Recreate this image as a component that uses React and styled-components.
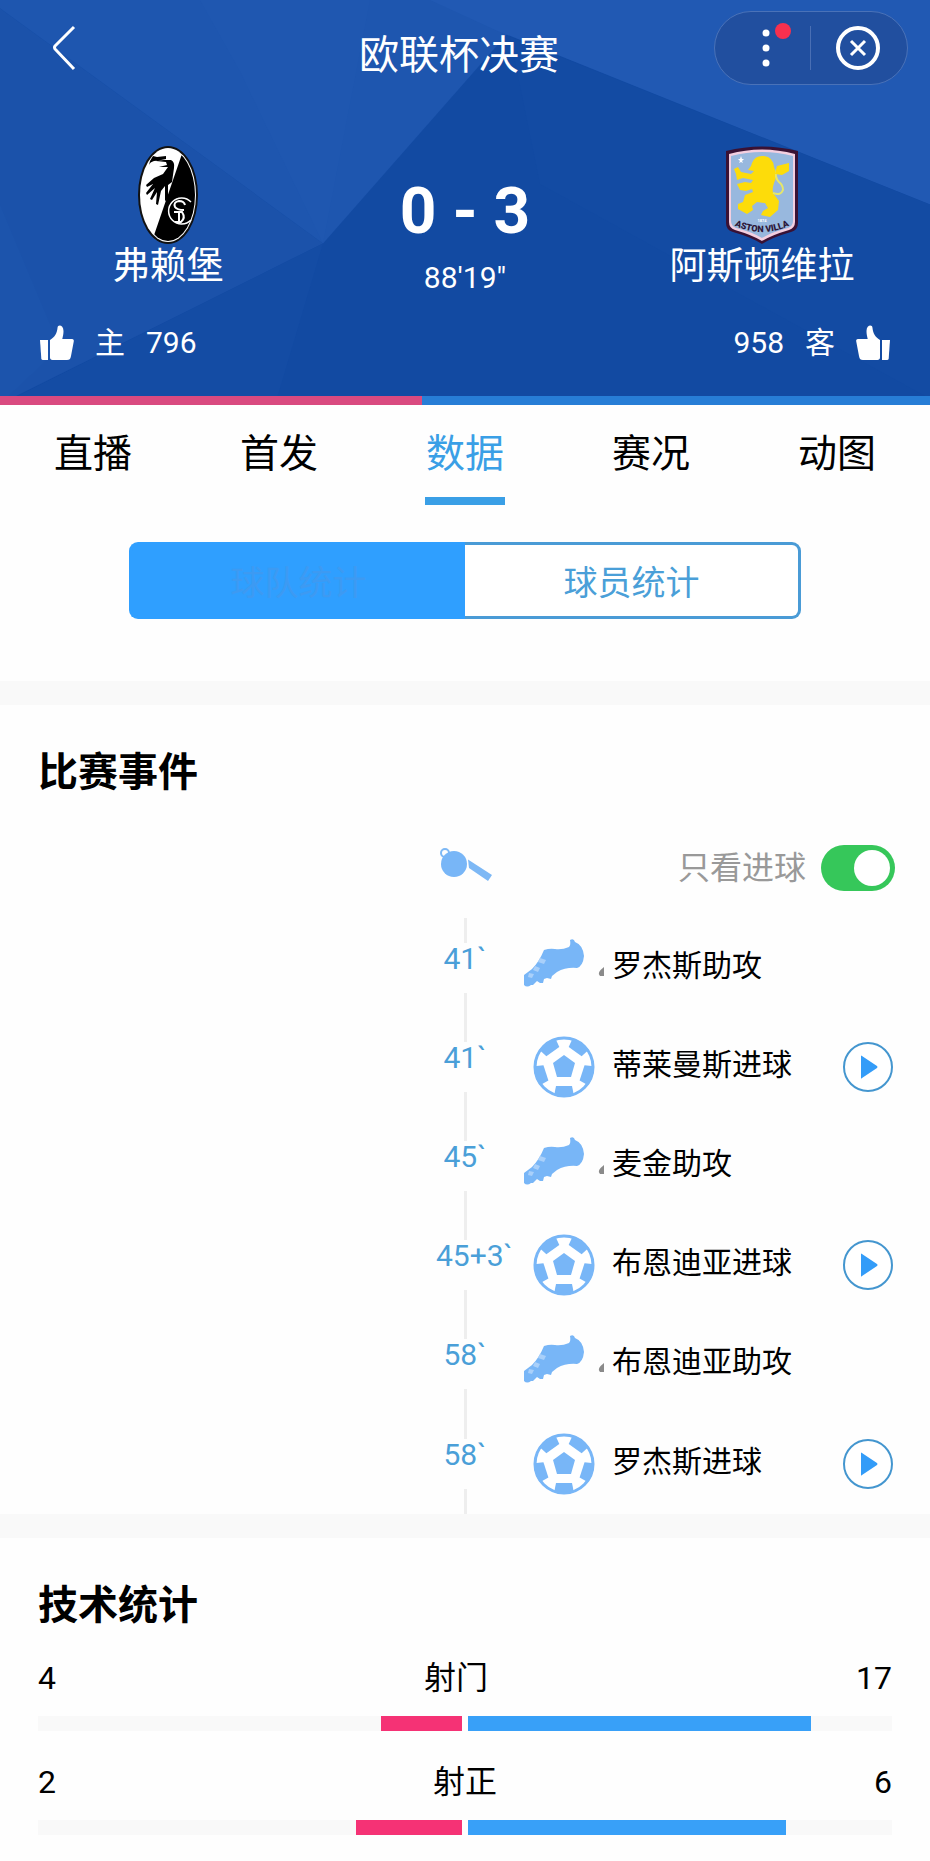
import React, { useState } from "react";
import styled, { createGlobalStyle } from "styled-components";

const GlobalStyle = createGlobalStyle`
  * {
    box-sizing: border-box;
  }
  body {
    margin: 0;
    background: #fefefe;
    color: #000;
    font-family: Roboto, "Noto Sans CJK SC", sans-serif;
  }
  button {
    padding: 0;
    border: 0;
    background: none;
    color: inherit;
    font: inherit;
    cursor: pointer;
  }
  h1, h2, p, ul {
    margin: 0;
    padding: 0;
  }
  svg {
    display: block;
    overflow: visible;
  }
`;

const Hero = styled.header`
  position: relative;
  color: #fff;
  background: #124aa2;
`;
const HeroPattern = styled.svg`
  position: absolute;
  inset: 0;
  width: 100%;
  height: 100%;
  overflow: hidden;
`;
const HeroContent = styled.div`
  position: relative;
  height: 396px;
`;
const TopBar = styled.div`
  display: grid;
  grid-template-columns: 204px 1fr 194px;
  align-items: center;
  padding: 11px 22px 0 0;
`;
const BackButton = styled.button`
  justify-self: start;
  padding-left: 52px;
`;
const Title = styled.h1`
  font-size: 40px;
  font-weight: 400;
  line-height: 56px;
  padding: 16px 0 0;
  text-align: center;
`;
const Capsule = styled.div`
  display: grid;
  grid-template-columns: 95px 1fr;
  align-items: center;
  height: 74px;
  border: 1px solid #4a72b8;
  border-radius: 37px;
  background: #214f9f;
`;
const CapsuleButton = styled.button`
  display: flex;
  justify-content: center;
  & + & {
    border-left: 1px solid #4a6fb4;
  }
`;
const Scoreboard = styled.div`
  display: grid;
  grid-template-columns: 336px 1fr 336px;
  padding-top: 61px;
`;
const Team = styled.div`
  display: flex;
  flex-direction: column;
  align-items: center;
`;
const TeamName = styled.p`
  font-size: 37px;
  line-height: 46px;
`;
const Score = styled.p`
  font-size: 64px;
  font-weight: 700;
  line-height: 72px;
  padding-top: 30px;
  text-align: center;
`;
const Clock = styled.p`
  font-size: 30px;
  line-height: 36px;
  padding-top: 12px;
  text-align: center;
`;
const Votes = styled.div`
  display: flex;
  justify-content: space-between;
  padding: 29px 40px 0;
`;
const VoteButton = styled.button`
  display: flex;
  flex-direction: ${(p) => (p.$away ? "row-reverse" : "row")};
  align-items: center;
  gap: 21px;
  font-size: 30px;
  line-height: 36px;
  svg {
    transform: ${(p) => (p.$away ? "scaleX(-1)" : "none")};
  }
`;
const VoteBar = styled.div`
  position: relative;
  display: flex;
  height: 9px;
  background: #277dd6;
`;
const VoteShare = styled.div`
  background: #d94a80;
`;

const Tabs = styled.nav`
  display: grid;
  grid-template-columns: repeat(5, 1fr);
`;
const Tab = styled.button`
  display: flex;
  flex-direction: column;
  align-items: center;
  gap: 15px;
  padding-top: 21px;
  font-size: 39px;
  line-height: 56px;
  color: ${(p) => (p.$active ? "#3a9fe6" : "#000")};
  &::after {
    content: "";
    width: 80px;
    height: 8px;
    background: ${(p) => (p.$active ? "#3a9fe6" : "transparent")};
  }
`;
const Segments = styled.div`
  display: flex;
  margin: 37px 129px 62px;
  height: 77px;
`;
const Segment = styled.button`
  flex: 1;
  font-size: 34px;
  color: ${(p) => (p.$active ? "#3d9af2" : "#4a9fd8")};
  background: ${(p) => (p.$active ? "#2f9fff" : "#fff")};
  border: 3px solid ${(p) => (p.$active ? "#2f9fff" : "#4a9bd6")};
  &:first-child {
    border-right: 0;
    border-radius: 9px 0 0 9px;
  }
  &:last-child {
    border-left: 0;
    border-radius: 0 9px 9px 0;
  }
`;

const Divider = styled.div`
  height: 24px;
  background: #f9f9f9;
`;
const SectionTitle = styled.h2`
  padding: 40px 38px 0;
  font-size: 40px;
  font-weight: 700;
  line-height: 56px;
`;
const EventsHead = styled.div`
  display: grid;
  grid-template-columns: 1fr 1fr;
  padding: 44px 0 27px;
`;
const KickOff = styled.div`
  grid-column: 2;
  grid-row: 1;
  justify-self: start;
  margin: 2px 0 0 -25px;
`;
const GoalsOnly = styled.label`
  grid-column: 2;
  grid-row: 1;
  justify-self: end;
  display: flex;
  align-items: center;
  gap: 15px;
  padding-right: 35px;
  font-size: 32px;
  line-height: 46px;
  color: #999;
`;
const Switch = styled.input`
  appearance: none;
  display: flex;
  justify-content: flex-end;
  width: 74px;
  height: 46px;
  margin: 0;
  padding: 5px;
  border-radius: 23px;
  background: ${(p) => (p.checked ? "#36c75a" : "#ddd")};
  &::before {
    content: "";
    width: 36px;
    height: 36px;
    border-radius: 50%;
    background: #fff;
    margin-right: ${(p) => (p.checked ? "0" : "28px")};
  }
`;
const EventList = styled.ul`
  list-style: none;
`;
const EventRow = styled.li`
  display: grid;
  grid-template-columns: 58px 80px 1fr 50px;
  align-items: center;
  height: 99px;
  margin-left: calc(50% - 29px);
  padding-right: 37px;
  &:last-child {
    height: 101px;
  }
`;
const TimeCell = styled.div`
  display: flex;
  flex-direction: column;
  height: 100%;
  &::before,
  &::after {
    content: "";
    flex: 1;
    width: 3px;
    margin: 0 auto;
    background: #eee;
  }
`;
const Time = styled.time`
  height: 50px;
  font-size: 30px;
  line-height: 32px;
  text-align: center;
  white-space: nowrap;
  color: #4a9fd8;
`;
const EventIcon = styled.div`
  margin-left: 30px;
`;
const EventText = styled.p`
  padding: 0 0 3px 38px;
  font-size: 30px;
  line-height: 44px;
`;

const StatList = styled.div`
  padding: 21px 0 10px;
`;
const Stat = styled.div`
  padding: 0 38px;
`;
const StatLabels = styled.div`
  display: flex;
  justify-content: space-between;
  font-size: 32px;
  line-height: 46px;
`;
const StatBars = styled.div`
  display: grid;
  grid-template-columns: 1fr 1fr;
  gap: 6px;
  margin: 15px 0 28px;
`;
const StatTrack = styled.div`
  display: flex;
  justify-content: ${(p) => (p.$home ? "flex-end" : "flex-start")};
  height: 15px;
  background: #f9f9f9;
`;
const StatFill = styled.div`
  background: ${(p) => (p.$home ? "#f53275" : "#38a0f8")};
`;

const Thumb = () => (
  <svg width="34" height="36" viewBox="0 0 34 36" fill="#fff">
    <path d="M0 15h8v20H3q-1.500 0-1.700-1.500z" />
    <path d="M10 15C15 12 17 8 17.500 3c.2-4 6-3 6 3 0 3-.6 5.500-1.200 8H32c1.500 0 2 1 1.800 2.300L31 31c-.6 3-1.500 4-4 4H12.500c-1.600 0-2.500-1-2.500-2.500z" />
  </svg>
);

const FreiburgCrest = () => (
  <svg width="60" height="98" viewBox="0 0 60 98">
    <clipPath id="oval">
      <ellipse cx="30" cy="49" rx="27" ry="46" />
    </clipPath>
    <ellipse cx="30" cy="49" rx="30" ry="49" fill="#111" />
    <ellipse cx="30" cy="49" rx="28" ry="47" fill="#fff" />
    <path clipPath="url(#oval)" d="M45 5 14 95h46V5z" fill="#000" />
    <path d="M11 19q1-3 5-4l10-1h7q4 2 3 8l-2 14-4 3 0 14-3 2 0-15-4 5-3 14-2-1 1-12-5 8-2-1 5-11-8 7-1-2 7-9-6 3-1-2 8-7 9-4 5-7-9 0 8-2-1-3-10-1 10-2v-3l-9 1-4-1-3 5z" fill="#000" />
    <g fill="none" stroke="#fff" strokeWidth="1.500">
      <path d="M53 56a13 13 0 1 0 0 18" />
      <path d="M47 59q-1-4-6-4-6 1-4 6 2 3 9 3M36 66h8q4 6-1 10h-6M41 66v9" strokeWidth="2" />
    </g>
  </svg>
);

const VillaCrest = () => (
  <svg width="74" height="98" viewBox="0 0 74 98">
    <path d="M1 5Q37-4 73 5v72q0 7-7 9-18 5-29 12-11-7-29-12-7-2-7-9z" fill="#3a1234" />
    <path d="M4 8Q37-1 70 8v68q0 6-6 8-17 5-27 11-10-6-27-11-6-2-6-8z" fill="#f3cfe0" />
    <path d="M6 10Q37 2 68 10v65q0 5-5 7-16 4-26 10-10-6-26-10-5-2-5-7z" fill="#98b8de" />
    <path d="m16 10 1 3h2l-2 2 1 2-2-1-2 1 1-2-2-2h2z" fill="#fff" />
    <path d="M27 17q3-8 12-7 9 1 10 11l3 8-3 8q-2 6-1 10l6 8-1 9-8 7-9-2 2-4 5-3-3-5-8-1-5 4 1 4-6 4-9-5 0-5 5-2 2-7 8-3-1-3-6 2-6-1-3-6 8-2 6 1 2-3-10-2-6 2-1-6-2-5 4-2 3 5 10 2 3-3-6-1 3-4z" fill="#fddc0a" />
    <path d="M48 47q8 3 10-3 0-5-4-8-5-5-2-13" fill="none" stroke="#e6e66a" strokeWidth="2" />
    <path d="m50 28 2-8 12-3 0 8-7 4z" fill="#fddc0a" />
    <path id="villaArc" d="M8 79Q37 93 66 79" fill="none" />
    <text fontSize="4" fill="#fff" x="37" y="76" textAnchor="middle" fontWeight="700">1874</text>
    <text fontSize="9" fontWeight="900" fill="#2d1738" textAnchor="middle">
      <textPath href="#villaArc" startOffset="50%">ASTON VILLA</textPath>
    </text>
  </svg>
);

const Whistle = () => (
  <svg width="52" height="36" viewBox="0 0 52 36">
    <circle cx="5" cy="6" r="4" fill="none" stroke="#7db8f5" strokeWidth="2" />
    <circle cx="14" cy="17" r="13" fill="#78b6f7" />
    <path d="M28 12.500 52 28l-4 6-19-13z" fill="#7db8f5" />
  </svg>
);

const Boot = () => (
  <svg width="80" height="62" viewBox="0 0 80 62">
    <path d="M0 35 8 29q7-7 12-19 6-2 11-1 7 1 14-2 2-2 1-7 4-2 5 2 8 3 9 14-1 10-7 12-11-1-20 4l-5 4-1 3-4-1-3 1-1 4-3 0-3-2-4 4-2 0q-4 3-7 0z" transform="translate(0 3)" fill="#78b6f7" />
    <path d="m16 21 6 2-2 4-6-2zM11 29l5 2-2 4-5-2zM5 36l5 1-2 4-4-1z" fill="#a9d0fa" />
    <path d="M80 30v9h-4q-4-3 4-9z" fill="#8a8a8a" />
  </svg>
);

const Ball = () => (
  <svg width="80" height="62" viewBox="-40 -31 80 62">
    <clipPath id="ball">
      <circle r="30" />
    </clipPath>
    <circle r="30" fill="#fff" />
    <path d="M0-12 11-4 7 10H-7L-11-4z" fill="#78b6f7" />
    <g clipPath="url(#ball)" fill="#78b6f7">
      {[0, 72, 144, 216, 288].map((angle) => (
        <path key={angle} transform={`rotate(${angle})`} d="M-11 34 -8 19H8l3 15z" />
      ))}
    </g>
    <circle r="29" fill="none" stroke="#78b6f7" strokeWidth="3" />
  </svg>
);

const PlayIcon = () => (
  <svg width="50" height="50" viewBox="0 0 50 50">
    <circle cx="25" cy="25" r="24" fill="#fff" stroke="#4496cf" strokeWidth="2" />
    <path d="M18 14q0-1 1 0l15 10q1 1 0 2L19 36q-1 1-1 0z" fill="#339cf8" />
  </svg>
);

const tabs = ["直播", "首发", "数据", "赛况", "动图"];

const segments = ["球队统计", "球员统计"];

const events = [
  { time: "41`", type: "assist", text: "罗杰斯助攻" },
  { time: "41`", type: "goal", text: "蒂莱曼斯进球" },
  { time: "45`", type: "assist", text: "麦金助攻" },
  { time: "45+3`", type: "goal", text: "布恩迪亚进球" },
  { time: "58`", type: "assist", text: "布恩迪亚助攻" },
  { time: "58`", type: "goal", text: "罗杰斯进球" },
];

const stats = [
  { label: "射门", home: 4, away: 17 },
  { label: "射正", home: 2, away: 6 },
];

const votes = { home: 796, away: 958 };

export default function App() {
  const [tab, setTab] = useState("数据");
  const [segment, setSegment] = useState("球队统计");
  const [goalsOnly, setGoalsOnly] = useState(true);

  return (
    <>
      <GlobalStyle />
      <Hero>
        <HeroPattern viewBox="0 0 930 396" preserveAspectRatio="none">
          <path d="M0 0H930V396H0z" fill="#124aa2" />
          <path d="M0 8 323 238 0 395z" fill="#1b52aa" />
          <path d="M0 0H440L510 30 323 238 0 8z" fill="#1e56af" />
          <path d="M240 70 323 238 370 0H200z" fill="#1f57b0" />
          <path d="M430 0H930V200L497 30z" fill="#2159b3" />
          <path d="M0 200 60 340 0 395z" fill="#1c54ac" />
          <path d="M323 238 275 396H0z" fill="#144ca4" />
          <path d="M510 36 540 180 930 390V200z" fill="#134ba3" />
        </HeroPattern>
        <HeroContent>
          <TopBar>
            <BackButton aria-label="返回">
              <svg width="24" height="44" viewBox="0 0 24 44" fill="none" stroke="#fff" strokeWidth="3">
                <path d="M22 1 3 20q-1 1 0 3l19 20" />
              </svg>
            </BackButton>
            <Title>欧联杯决赛</Title>
            <Capsule>
              <CapsuleButton aria-label="更多">
                <svg width="46" height="46" viewBox="0 0 46 46" fill="#fff">
                  <circle cx="26" cy="8" r="3.500" />
                  <circle cx="26" cy="23" r="3.500" />
                  <circle cx="26" cy="38" r="3.500" />
                  <circle cx="43" cy="6" r="8" fill="#f8304e" />
                </svg>
              </CapsuleButton>
              <CapsuleButton aria-label="关闭">
                <svg width="44" height="44" viewBox="0 0 44 44" fill="none" stroke="#fff">
                  <circle cx="21" cy="22" r="20" strokeWidth="4" />
                  <path d="m14 15 14 14M28 15 14 29" strokeWidth="3" />
                </svg>
              </CapsuleButton>
            </Capsule>
          </TopBar>
          <Scoreboard>
            <Team>
              <FreiburgCrest />
              <TeamName>弗赖堡</TeamName>
            </Team>
            <div>
              <Score>0 - 3</Score>
              <Clock>88'19"</Clock>
            </div>
            <Team>
              <VillaCrest />
              <TeamName>阿斯顿维拉</TeamName>
            </Team>
          </Scoreboard>
          <Votes>
            <VoteButton>
              <Thumb />
              <span>主</span>
              <span>{votes.home}</span>
            </VoteButton>
            <VoteButton $away>
              <Thumb />
              <span>客</span>
              <span>{votes.away}</span>
            </VoteButton>
          </Votes>
        </HeroContent>
        <VoteBar>
          <VoteShare style={{ width: `${(votes.home / (votes.home + votes.away)) * 100}%` }} />
        </VoteBar>
      </Hero>

      <Tabs>
        {tabs.map((name) => (
          <Tab key={name} $active={tab === name} onClick={() => setTab(name)}>
            {name}
          </Tab>
        ))}
      </Tabs>
      <Segments>
        {segments.map((name) => (
          <Segment key={name} $active={segment === name} onClick={() => setSegment(name)}>
            {name}
          </Segment>
        ))}
      </Segments>

      <Divider />
      <section>
        <SectionTitle>比赛事件</SectionTitle>
        <EventsHead>
          <KickOff>
            <Whistle />
          </KickOff>
          <GoalsOnly>
            只看进球
            <Switch type="checkbox" checked={goalsOnly} onChange={() => setGoalsOnly(!goalsOnly)} />
          </GoalsOnly>
        </EventsHead>
        <EventList>
          {events.map((event) => (
            <EventRow key={event.time + event.text}>
              <TimeCell>
                <Time>{event.time}</Time>
              </TimeCell>
              <EventIcon>{event.type === "goal" ? <Ball /> : <Boot />}</EventIcon>
              <EventText>{event.text}</EventText>
              {event.type === "goal" && (
                <button aria-label="播放">
                  <PlayIcon />
                </button>
              )}
            </EventRow>
          ))}
        </EventList>
      </section>

      <Divider />
      <section>
        <SectionTitle>技术统计</SectionTitle>
        <StatList>
          {stats.map(({ label, home, away }) => (
            <Stat key={label}>
              <StatLabels>
                <span>{home}</span>
                <span>{label}</span>
                <span>{away}</span>
              </StatLabels>
              <StatBars>
                <StatTrack $home>
                  <StatFill $home style={{ width: `${(home / (home + away)) * 100}%` }} />
                </StatTrack>
                <StatTrack>
                  <StatFill style={{ width: `${(away / (home + away)) * 100}%` }} />
                </StatTrack>
              </StatBars>
            </Stat>
          ))}
        </StatList>
      </section>
    </>
  );
}
